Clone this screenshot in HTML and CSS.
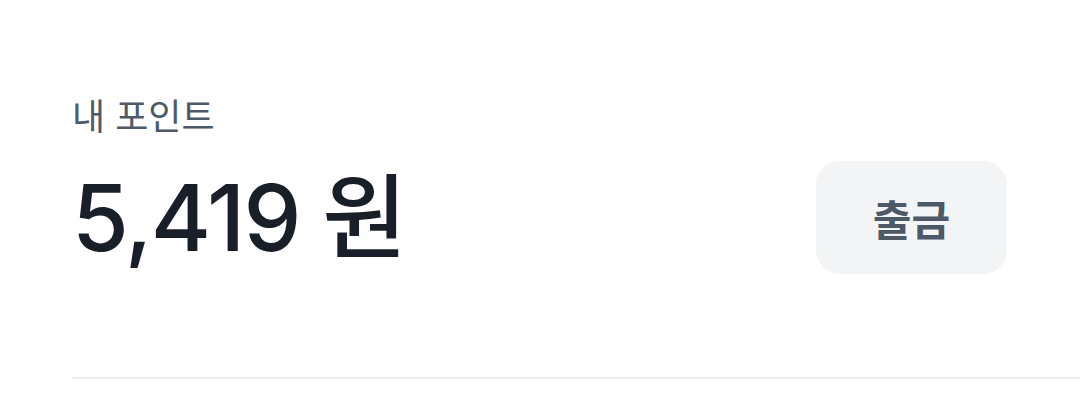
FILE: index.html
```html
<!DOCTYPE html>
<html lang="ko">
<head>
    <meta charset="UTF-8">
    <meta name="viewport" content="width=device-width, initial-scale=1.0">
    <title>내 포인트</title>
    <link rel="stylesheet" href="styles.css">
</head>
<body>
    <div class="point-card">
        <div class="point-label">내 포인트</div>
        <div class="point-row">
            <div class="point-amount">5,419 원</div>
            <button class="withdraw-button">출금</button>
        </div>
    </div>
    <div class="divider"></div>
</body>
</html>
```

FILE: styles.css
```css
body { margin: 0; background: #ffffff; font-family: "Noto Sans CJK KR", "Noto Sans", sans-serif; }
.point-card { padding: 88px 73px 0 72px; }
.point-label { font-size: 36px; line-height: 52px; color: #4e5968; }
.point-row { display: flex; justify-content: space-between; align-items: center; margin-top: 21px; }
.point-amount { font-family: Inter, "Noto Sans CJK KR", sans-serif; font-size: 92px; font-weight: 500; color: #191f28; letter-spacing: -1.8px; line-height: 112px; }
.withdraw-button { width: 191px; height: 113px; border: none; border-radius: 24px; background: #f2f4f6; color: #4e5968; font-family: "Noto Sans CJK KR", sans-serif; font-size: 42px; font-weight: 700; cursor: pointer; }
.divider { margin: 103px 0 0 72px; height: 2px; background: #eaecee; }
```
